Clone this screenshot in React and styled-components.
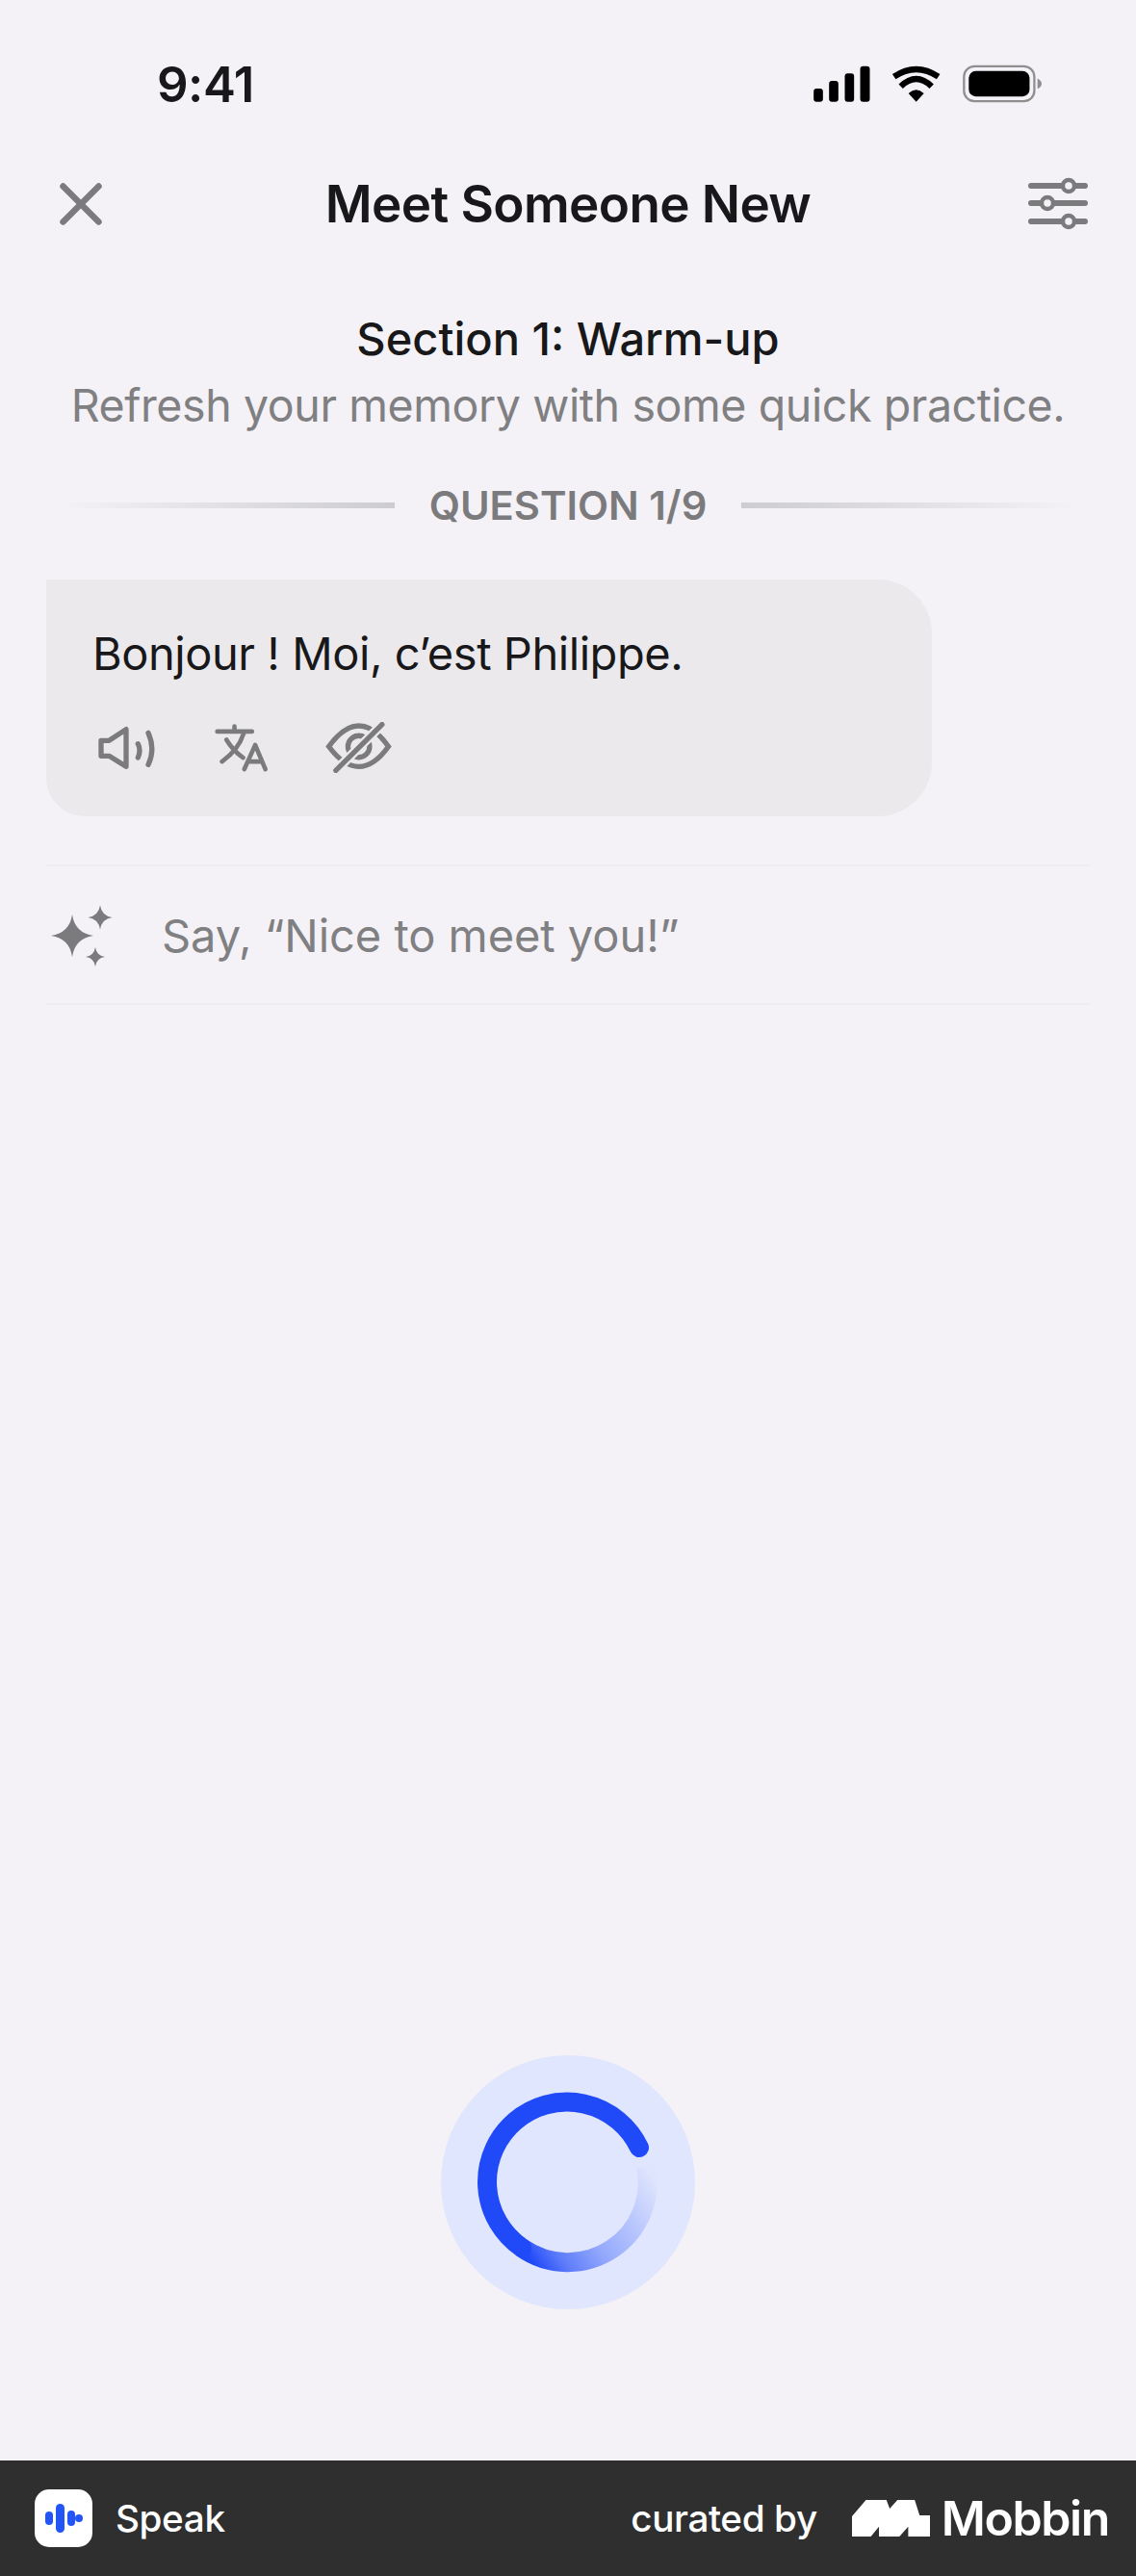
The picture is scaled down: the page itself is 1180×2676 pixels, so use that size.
import styled, { createGlobalStyle } from "styled-components"

const GlobalStyle = createGlobalStyle`
  * {
    box-sizing: border-box;
  }
  html,
  body {
    margin: 0;
    padding: 0;
    background: #f4f2f6;
  }
`

const Page = styled.div`
  display: flex;
  flex-direction: column;
  width: 1180px;
  height: 2676px;
  overflow: hidden;
  background: #f4f2f6;
  font-family: Inter, "Noto Sans", sans-serif;
  color: #18181a;
`

const StatusBar = styled.div`
  display: flex;
  align-items: center;
  justify-content: space-between;
  height: 174px;
  padding: 0 98px 0 163px;
`

const Clock = styled.span`
  font-size: 51px;
  font-weight: 600;
  letter-spacing: -0.5px;
`

const StatusIcons = styled.div`
  display: flex;
  align-items: center;
  gap: 22px;
`

const NavBar = styled.div`
  display: grid;
  grid-template-columns: 1fr auto 1fr;
  align-items: center;
  height: 76px;
  padding: 0 50px;
`

const NavStart = styled.div`
  display: flex;
  padding-left: 12px;
`

const Title = styled.h1`
  margin: 0;
  font-size: 53px;
  font-weight: 600;
  letter-spacing: -0.6px;
`

const NavEnd = styled.div`
  display: flex;
  justify-content: flex-end;
`

const Intro = styled.div`
  display: flex;
  flex-direction: column;
  align-items: center;
  margin-top: 70px;
`

const SectionName = styled.div`
  font-size: 47px;
  line-height: 64px;
  font-weight: 500;
`

const SectionHint = styled.div`
  margin-top: 5px;
  font-size: 46.5px;
  line-height: 64px;
  letter-spacing: -0.4px;
  color: #808083;
`

const QuestionRow = styled.div`
  display: flex;
  align-items: center;
  gap: 36px;
  margin-top: 44px;
  padding: 0 60px;
`

const FadeLine = styled.div`
  flex: 1;
  height: 6px;
  background: linear-gradient(
    ${(p) => (p.$flip ? "to left" : "to right")},
    rgba(205, 204, 208, 0),
    #cdccd0
  );
`

const QuestionLabel = styled.div`
  font-size: 41.7px;
  line-height: 56px;
  font-weight: 600;
  color: #7b7b7e;
`

const Bubble = styled.div`
  width: 920px;
  height: 246px;
  margin: 49px 0 0 48px;
  padding: 42px 0 0 48px;
  border-radius: 2px 56px 56px 40px;
  background: #ebe9ec;
`

const BubbleText = styled.div`
  font-size: 47px;
  line-height: 70px;
  letter-spacing: -0.45px;
`

const BubbleActions = styled.div`
  display: flex;
  align-items: center;
  gap: 57px;
  margin-top: 36px;
  margin-left: 4px;
`

const HintRow = styled.div`
  display: flex;
  align-items: center;
  gap: 48px;
  height: 146px;
  margin: 50px 48px 0;
  padding-left: 2px;
  border-top: 2px solid #eeedf1;
  border-bottom: 2px solid #eeedf1;
`

const HintText = styled.div`
  font-size: 47px;
  letter-spacing: -0.05px;
  color: #808083;
`

const Spacer = styled.div`
  flex: 1;
`

const MicWrap = styled.div`
  display: flex;
  justify-content: center;
  margin-bottom: 157px;
`

const MicCircle = styled.div`
  display: flex;
  align-items: center;
  justify-content: center;
  width: 264px;
  height: 264px;
  border-radius: 50%;
  background: #e0e6fd;
`

const Footer = styled.div`
  display: flex;
  align-items: center;
  justify-content: space-between;
  height: 120px;
  padding: 0 28px 0 36px;
  background: #2f2f2f;
  color: #ffffff;
`

const FooterSide = styled.div`
  display: flex;
  align-items: center;
  gap: ${(p) => p.$gap}px;
`

const AppIcon = styled.div`
  display: flex;
  align-items: center;
  justify-content: center;
  width: 60px;
  height: 60px;
  border-radius: 15px;
  background: #ffffff;
`

const FooterText = styled.span`
  font-size: 38.7px;
  font-weight: 500;
  letter-spacing: -0.4px;
`

const MobbinMark = styled.div`
  display: flex;
  align-items: center;
  gap: 12px;
`

const MobbinName = styled.span`
  font-size: 50px;
  line-height: 50px;
  font-weight: 600;
  letter-spacing: -1.4px;
`

const starPath = (cx, cy, r) => {
  const k = r * 0.13
  return `M${cx} ${cy - r}Q${cx + k} ${cy - k} ${cx + r} ${cy}Q${cx + k} ${cy + k} ${cx} ${cy + r}Q${cx - k} ${cy + k} ${cx - r} ${cy}Q${cx - k} ${cy - k} ${cx} ${cy - r}Z`
}

const SignalIcon = () => (
  <svg width="59" height="38" viewBox="140 85 176 114" fill="#000">
    <rect x="140" y="157" width="29" height="41" rx="9" />
    <rect x="188" y="133" width="29" height="65" rx="9" />
    <rect x="237" y="110" width="29" height="88" rx="9" />
    <rect x="285" y="87" width="30" height="111" rx="9" />
  </svg>
)

const WifiIcon = () => (
  <svg width="52" height="38" viewBox="380 85 156 114" fill="none" stroke="#000">
    <path d="M388 120Q457 74 526 120" strokeWidth="19" />
    <path d="M409 150Q457 104 505 150" strokeWidth="19" />
    <path d="M457 198L433 172Q457 150 481 172Z" fill="#000" stroke="none" />
  </svg>
)

const BatteryIcon = () => (
  <svg width="82" height="40" viewBox="598 82 248 120">
    <rect x="602" y="87" width="221" height="110" rx="33" fill="none" stroke="#8f8f8f" strokeWidth="7" />
    <rect x="617" y="102" width="191" height="80" rx="22" fill="#000" />
    <path d="M833 125Q846 132 846 142Q846 152 833 158Z" fill="#8f8f8f" />
  </svg>
)

const CloseIcon = () => (
  <svg width="44" height="44" viewBox="0 0 44 44" stroke="#7b7b7e" strokeWidth="6.5" strokeLinecap="round">
    <path d="M3.5 3.5L40.5 40.5M40.5 3.5L3.5 40.5" />
  </svg>
)

const SlidersIcon = () => (
  <svg width="62" height="56" viewBox="0 0 62 56" fill="none" stroke="#7b7b7e" strokeLinecap="round">
    <path d="M3 9H59M3 27H59M3 46H59" strokeWidth="6" />
    <g fill="#f4f2f6" strokeWidth="4.5">
      <circle cx="42" cy="9" r="6" />
      <circle cx="20" cy="27" r="6" />
      <circle cx="42" cy="46" r="6" />
    </g>
  </svg>
)

const SpeakerIcon = () => (
  <svg width="65" height="50" viewBox="60 60 195 150" fill="none" stroke="#7b7b7e" strokeWidth="16" strokeLinecap="round" strokeLinejoin="round">
    <path d="M75 112H100L153 77V193L100 160H75Z" />
    <path d="M190 122Q200 142 190 165M222 88Q245 138 222 187" />
  </svg>
)

const TranslateIcon = () => (
  <svg width="58" height="53" viewBox="430 60 175 160" fill="none" stroke="#7b7b7e" strokeWidth="14" strokeLinecap="round" strokeLinejoin="round">
    <path d="M441 90H550M495 74V90M525 92Q510 145 456 184M470 116Q490 150 522 172" />
    <path d="M526 208L560 132L592 208M538 184H580" />
  </svg>
)

const EyeOffIcon = () => (
  <svg width="70" height="53" viewBox="770 60 210 160" fill="none" stroke="#7b7b7e" strokeWidth="16" strokeLinecap="round">
    <path d="M783 137Q830 72 877 72Q925 72 970 137Q925 200 877 200Q830 200 783 137Z" />
    <circle cx="877" cy="137" r="34" />
    <path d="M805 212L950 68" stroke="#ebe9ec" strokeWidth="30" />
    <path d="M805 212L950 68" />
  </svg>
)

const SparkleIcon = () => (
  <svg width="70" height="72" viewBox="50 935 70 72" fill="#7b7b7e">
    <path d={starPath(75, 972, 22)} />
    <path d={starPath(104, 953, 12.5)} />
    <path d={starPath(99, 994, 10)} />
  </svg>
)

const Spinner = () => (
  <svg width="200" height="200" viewBox="-100 -100 200 200" fill="none" strokeWidth="20">
    <defs>
      <linearGradient id="tail" gradientUnits="userSpaceOnUse" x1="-48" y1="68" x2="78" y2="-20">
        <stop offset="0" stopColor="#2049f8" />
        <stop offset="0.18" stopColor="#5f7dfa" />
        <stop offset="0.42" stopColor="#93a8fc" />
        <stop offset="1" stopColor="#dfe5fd" />
      </linearGradient>
    </defs>
    <path d="M-48 68A83 83 0 0 0 81 -17" stroke="url(#tail)" />
    <path d="M74 -36A83 83 0 1 0 -48 68" stroke="#2049f8" strokeLinecap="round" />
  </svg>
)

const SpeakLogo = () => (
  <svg width="42" height="30" viewBox="0 0 42 30" fill="#2354f5">
    <rect x="2" y="8" width="8" height="14" rx="4" />
    <rect x="13" y="0" width="9" height="30" rx="4.5" />
    <rect x="25" y="7" width="8" height="16" rx="4" />
    <circle cx="37" cy="15" r="4" />
  </svg>
)

const MobbinLogo = () => (
  <svg width="81" height="38" viewBox="22 18 240 112" fill="#fff">
    <path d="M22 68L65 18H128L138 44L162 18H215L230 65H262V130H195V100L168 130H105V100L80 130H22Z" />
  </svg>
)

const App = () => {
  return (
    <Page>
      <GlobalStyle />
      <StatusBar>
        <Clock>9:41</Clock>
        <StatusIcons>
          <SignalIcon />
          <WifiIcon />
          <BatteryIcon />
        </StatusIcons>
      </StatusBar>

      <NavBar>
        <NavStart>
          <CloseIcon />
        </NavStart>
        <Title>Meet Someone New</Title>
        <NavEnd>
          <SlidersIcon />
        </NavEnd>
      </NavBar>

      <Intro>
        <SectionName>Section 1: Warm-up</SectionName>
        <SectionHint>Refresh your memory with some quick practice.</SectionHint>
      </Intro>

      <QuestionRow>
        <FadeLine />
        <QuestionLabel>QUESTION 1/9</QuestionLabel>
        <FadeLine $flip />
      </QuestionRow>

      <Bubble>
        <BubbleText>Bonjour ! Moi, c’est Philippe.</BubbleText>
        <BubbleActions>
          <SpeakerIcon />
          <TranslateIcon />
          <EyeOffIcon />
        </BubbleActions>
      </Bubble>

      <HintRow>
        <SparkleIcon />
        <HintText>Say, “Nice to meet you!”</HintText>
      </HintRow>

      <Spacer />

      <MicWrap>
        <MicCircle>
          <Spinner />
        </MicCircle>
      </MicWrap>

      <Footer>
        <FooterSide $gap={24}>
          <AppIcon>
            <SpeakLogo />
          </AppIcon>
          <FooterText>Speak</FooterText>
        </FooterSide>
        <FooterSide $gap={36}>
          <FooterText>curated by</FooterText>
          <MobbinMark>
            <MobbinLogo />
            <MobbinName>Mobbin</MobbinName>
          </MobbinMark>
        </FooterSide>
      </Footer>
    </Page>
  )
}

export default App
